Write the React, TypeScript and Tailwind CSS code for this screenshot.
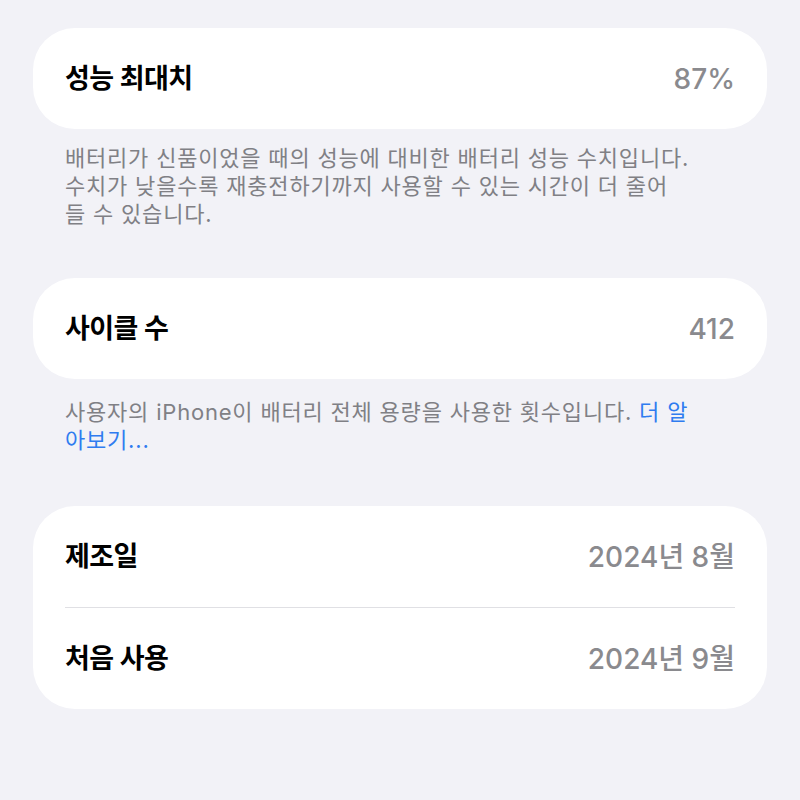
import React from "react";

const KR = "font-['Inter','Noto_Sans_CJK_KR',sans-serif]";

function Card({ children }: { children: React.ReactNode }) {
  return <div className="bg-white rounded-[42px] px-[32px]">{children}</div>;
}

function Row({ label, value }: { label: string; value: string }) {
  return (
    <div className="h-[101px] flex items-center justify-between">
      <span className="text-[27px] font-semibold text-black tracking-[-0.6px] leading-none">{label}</span>
      <span className="text-[28px] font-medium text-[#8a8a8e] tracking-[0px] leading-none">{value}</span>
    </div>
  );
}

export default function App() {
  return (
    <div className={`${KR} w-[800px] h-[800px] bg-[#f2f2f7] px-[33px] pt-[28px] overflow-hidden`}>
      <Card>
        <Row label="성능 최대치" value="87%" />
      </Card>
      <p className="mt-[15px] px-[32px] text-[22px] leading-[28px] text-[#808085] tracking-[0.8px] whitespace-nowrap">
        배터리가 신품이었을 때의 성능에 대비한 배터리 성능 수치입니다.
        <br />
        수치가 낮을수록 재충전하기까지 사용할 수 있는 시간이 더 줄어
        <br />
        들 수 있습니다.
      </p>
      <div className="mt-[50px]">
        <Card>
          <Row label="사이클 수" value="412" />
        </Card>
      </div>
      <p className="mt-[19px] px-[32px] text-[22px] leading-[28px] text-[#808085] tracking-[0.8px] whitespace-nowrap">
        사용자의 iPhone이 배터리 전체 용량을 사용한 횟수입니다.{" "}
        <span className="text-[#2f7cf0]">더 알</span>
        <br />
        <span className="text-[#2f7cf0]">아보기...</span>
      </p>
      <div className="mt-[52px]">
        <Card>
          <Row label="제조일" value="2024년 8월" />
          <div className="h-px bg-[#e0e0e4]" />
          <Row label="처음 사용" value="2024년 9월" />
        </Card>
      </div>
    </div>
  );
}
